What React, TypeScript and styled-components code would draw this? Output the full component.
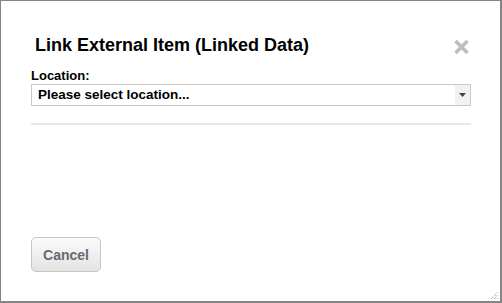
import React from "react";
import styled, { createGlobalStyle } from "styled-components";

const Global = createGlobalStyle`
  html, body { margin: 0; padding: 0; background: #fff; }
  body { font-family: "Liberation Sans", Arial, sans-serif; }
  * { box-sizing: border-box; }
`;

const Dialog = styled.div`
  position: relative;
  width: 502px;
  height: 303px;
  border: 1px solid #858585;
  border-right-width: 2px;
  border-bottom-width: 2px;
  background: #fff;
  display: flex;
  flex-direction: column;
`;

const Header = styled.div`
  display: flex;
  align-items: flex-start;
  justify-content: space-between;
  padding: 34px 31px 0 34px;
`;

const Title = styled.h1`
  margin: 0;
  font-size: 18px;
  line-height: 20px;
  font-weight: bold;
  color: #000;
`;

const CloseButton = styled.button`
  margin-top: 5px;
  padding: 0;
  border: 0;
  background: none;
  width: 15px;
  height: 14px;
  display: flex;
  cursor: pointer;
`;

const Body = styled.div`
  display: flex;
  flex-direction: column;
  padding: 0 29px 0 30px;
`;

const Label = styled.label`
  margin-top: 13px;
  font-size: 13px;
  line-height: 15px;
  font-weight: bold;
  color: #000;
`;

const SelectBox = styled.div`
  margin-top: 1px;
  height: 22px;
  border: 1px solid #c9c9c9;
  display: flex;
  align-items: stretch;
  background: #fff;
`;

const SelectText = styled.span`
  flex: 1;
  padding-left: 6px;
  font-size: 13.5px;
  line-height: 20px;
  font-weight: bold;
  color: #000;
`;

const SelectArrow = styled.span`
  width: 15px;
  background: #f2f2f2;
  display: flex;
  align-items: center;
  justify-content: center;
`;

const Divider = styled.hr`
  margin: 17px 0 0;
  border: 0;
  height: 2px;
  background: #e8e8e8;
`;

const Footer = styled.div`
  margin-top: auto;
  display: flex;
  padding: 0 30px 29px 30px;
`;

const Button = styled.button`
  width: 70px;
  height: 35px;
  border: 1px solid #c6c6c6;
  border-radius: 5px;
  background: linear-gradient(#fbfbfb, #e3e3e3);
  font-family: "Liberation Sans", Arial, sans-serif;
  font-size: 14px;
  font-weight: bold;
  color: #656a72;
  padding: 0;
  cursor: pointer;
`;

const Grip = styled.svg`
  position: absolute;
  right: 1px;
  bottom: 1px;
`;

export default function App() {
  return (
    <>
      <Global />
      <Dialog>
        <Header>
          <Title>Link External Item (Linked Data)</Title>
          <CloseButton aria-label="Close">
            <svg width="15" height="14" viewBox="0 0 15 14">
              <path d="M1.5 1 L13.5 13 M13.5 1 L1.5 13" stroke="#bdbdbd" strokeWidth="3.6" strokeLinecap="butt" />
            </svg>
          </CloseButton>
        </Header>
        <Body>
          <Label>Location:</Label>
          <SelectBox>
            <SelectText>Please select location...</SelectText>
            <SelectArrow>
              <svg width="7" height="4" viewBox="0 0 7 4">
                <path d="M0 0 H7 L3.5 4 Z" fill="#444" />
              </svg>
            </SelectArrow>
          </SelectBox>
          <Divider />
        </Body>
        <Footer>
          <Button>Cancel</Button>
        </Footer>
        <Grip width="9" height="9" viewBox="0 0 9 9">
          <path d="M1 8 L8 1 M4 8 L8 4 M7 8 L8 7" stroke="#888" strokeWidth="1" strokeDasharray="1 1" />
        </Grip>
      </Dialog>
    </>
  );
}
